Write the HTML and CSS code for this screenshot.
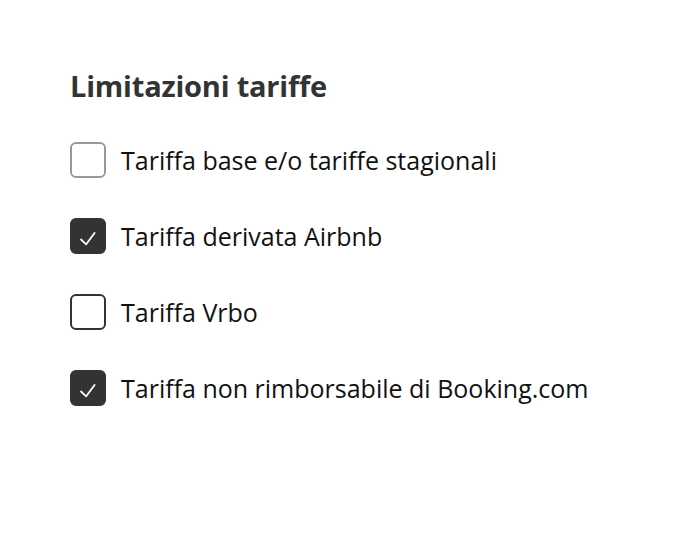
FILE: index.html
```html
<!DOCTYPE html>
<html>
<head>
  <meta charset="utf-8">
  <link rel="stylesheet" href="styles.css">
</head>
<body>
  <div class="panel">
    <h2 class="panel-title">Limitazioni tariffe</h2>

    <div class="options">
      <label class="option">
        <span class="box"></span>
        <span class="option-text">Tariffa base e/o tariffe stagionali</span>
      </label>

      <label class="option">
        <span class="box checked">
          <svg viewBox="0 0 20 20" width="20" height="20"><path d="M3 13.5l5.2 4.8L16.6 7" fill="none" stroke="#fff" stroke-width="1.8" stroke-linecap="round" stroke-linejoin="round"/></svg>
        </span>
        <span class="option-text">Tariffa derivata Airbnb</span>
      </label>

      <label class="option">
        <span class="box dark"></span>
        <span class="option-text">Tariffa Vrbo</span>
      </label>

      <label class="option">
        <span class="box checked">
          <svg viewBox="0 0 20 20" width="20" height="20"><path d="M3 13.5l5.2 4.8L16.6 7" fill="none" stroke="#fff" stroke-width="1.8" stroke-linecap="round" stroke-linejoin="round"/></svg>
        </span>
        <span class="option-text">Tariffa non rimborsabile di Booking.com</span>
      </label>
    </div>
  </div>
</body>
</html>
```

FILE: styles.css
```css
body {
  margin: 0;
  background-color: #ffffff;
  font-family: 'Open Sans', 'Liberation Sans', sans-serif;
}

.panel {
  padding: 68px 70px 0 70px;
}

.panel-title {
  margin: 0;
  font-size: 29px;
  line-height: 36px;
  font-weight: 700;
  color: #333333;
  letter-spacing: -0.2px;
}

.options {
  display: flex;
  flex-direction: column;
  gap: 40px;
  margin-top: 38px;
}

.option {
  display: flex;
  align-items: center;
  height: 36px;
  cursor: pointer;
}

.box {
  box-sizing: border-box;
  width: 36px;
  height: 36px;
  border: 2px solid #999999;
  border-radius: 6px;
  display: flex;
  align-items: center;
  justify-content: center;
  flex-shrink: 0;
}

.box.dark {
  border-color: #333333;
}

.box.checked {
  background-color: #333333;
  border-color: #333333;
}

.option-text {
  margin-left: 15px;
  font-size: 25px;
  color: #111111;
}
```
